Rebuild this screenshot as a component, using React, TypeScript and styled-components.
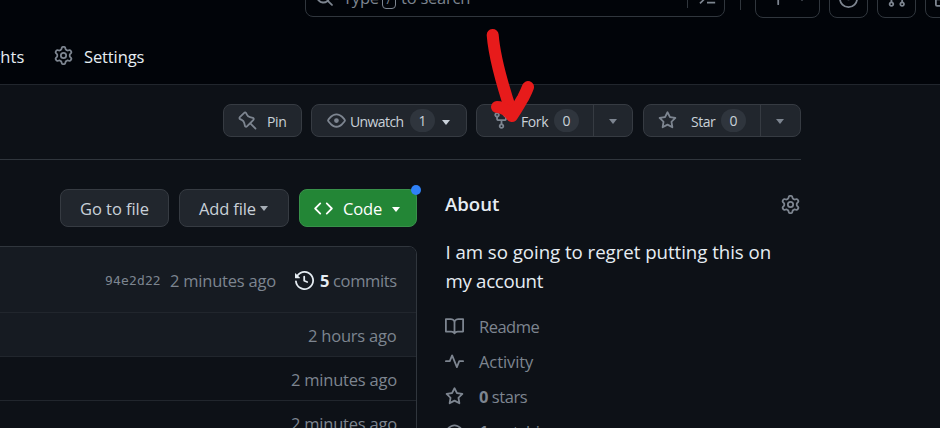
import React from 'react';
import styled, { createGlobalStyle, css } from 'styled-components';

const GlobalStyle = createGlobalStyle`
  *, *::before, *::after { box-sizing: border-box; }
  body { margin: 0; background: #0d1117; overflow: hidden; }
`;

const color = {
  canvas: '#0d1117',
  inset: '#010409',
  subtle: '#161b22',
  button: '#21262d',
  border: '#30363d',
  muted: '#7d8590',
  text: '#e6edf3',
  buttonText: '#c9d1d9',
};

const icons = {
  gear: 'M8 0a8.2 8.2 0 0 1 .701.031C9.444.095 9.99.645 10.16 1.29l.288 1.107c.018.066.079.158.212.224.231.114.454.243.668.386.123.082.233.09.299.071l1.103-.303c.644-.176 1.392.021 1.82.63.27.385.506.792.704 1.218.315.675.111 1.422-.364 1.891l-.814.806c-.049.048-.098.147-.088.294.016.257.016.515 0 .772-.01.147.038.246.088.294l.814.806c.475.469.679 1.216.364 1.891a7.977 7.977 0 0 1-.704 1.217c-.428.61-1.176.807-1.82.63l-1.102-.302c-.067-.019-.177-.011-.3.071a5.909 5.909 0 0 1-.668.386c-.133.066-.194.158-.211.224l-.29 1.106c-.168.646-.715 1.196-1.458 1.26a8.006 8.006 0 0 1-1.402 0c-.743-.064-1.289-.614-1.458-1.26l-.289-1.106c-.018-.066-.079-.158-.212-.224a5.738 5.738 0 0 1-.668-.386c-.123-.082-.233-.09-.299-.071l-1.103.303c-.644.176-1.392-.021-1.82-.63a8.12 8.12 0 0 1-.704-1.218c-.315-.675-.111-1.422.363-1.891l.815-.806c.05-.048.098-.147.088-.294a6.214 6.214 0 0 1 0-.772c.01-.147-.038-.246-.088-.294l-.815-.806C.635 6.045.431 5.298.746 4.623a7.92 7.92 0 0 1 .704-1.217c.428-.61 1.176-.807 1.82-.63l1.102.302c.067.019.177.011.3-.071.214-.143.437-.272.668-.386.133-.066.194-.158.211-.224l.29-1.106C6.009.645 6.556.095 7.299.03 7.53.01 7.764 0 8 0Zm-.571 1.525c-.036.003-.108.036-.137.146l-.289 1.105c-.147.561-.549.967-.998 1.189-.173.086-.34.183-.5.29-.417.278-.97.423-1.529.27l-1.103-.303c-.109-.03-.175.016-.195.045-.22.312-.412.644-.573.99-.014.031-.021.11.059.19l.815.806c.411.406.562.957.53 1.456a4.709 4.709 0 0 0 0 .582c.032.499-.119 1.05-.53 1.456l-.815.806c-.081.08-.073.159-.059.19.162.346.353.677.573.989.02.03.085.076.195.046l1.102-.303c.56-.153 1.113-.008 1.53.27.161.107.328.204.501.29.447.222.85.629.997 1.189l.289 1.105c.029.109.101.143.137.146a6.6 6.6 0 0 0 1.142 0c.036-.003.108-.036.137-.146l.289-1.105c.147-.561.549-.967.998-1.189.173-.086.34-.183.5-.29.417-.278.97-.423 1.529-.27l1.103.303c.109.029.175-.016.195-.045.22-.313.411-.644.573-.99.014-.031.021-.11-.059-.19l-.815-.806c-.411-.406-.562-.957-.53-1.456a4.709 4.709 0 0 0 0-.582c-.032-.499.119-1.05.53-1.456l.815-.806c.081-.08.073-.159.059-.19a6.464 6.464 0 0 0-.573-.989c-.02-.03-.085-.076-.195-.046l-1.102.303c-.56.153-1.113.008-1.53-.27a4.44 4.44 0 0 0-.501-.29c-.447-.222-.85-.629-.997-1.189l-.289-1.105c-.029-.11-.101-.143-.137-.146a6.6 6.6 0 0 0-1.142 0ZM11 8a3 3 0 1 1-6 0 3 3 0 0 1 6 0ZM9.5 8a1.5 1.5 0 1 0-3.001.001A1.5 1.5 0 0 0 9.5 8Z',
  pin: 'm11.294.984 3.722 3.722a1.75 1.75 0 0 1-.504 2.826l-1.327.613a3.089 3.089 0 0 0-1.707 2.084l-.584 2.454c-.317 1.332-1.972 1.8-2.94.832L5.75 11.311 1.78 15.28a.749.749 0 1 1-1.06-1.06l3.969-3.97-2.204-2.204c-.968-.968-.5-2.623.832-2.94l2.454-.584a3.08 3.08 0 0 0 2.084-1.707l.613-1.327a1.75 1.75 0 0 1 2.826-.504ZM6.283 9.723l2.732 2.731a.25.25 0 0 0 .42-.119l.584-2.454a4.586 4.586 0 0 1 2.537-3.098l1.328-.613a.25.25 0 0 0 .072-.404l-3.722-3.722a.25.25 0 0 0-.404.072l-.613 1.328a4.584 4.584 0 0 1-3.098 2.537l-2.454.584a.25.25 0 0 0-.119.42l2.731 2.732Z',
  eye: 'M8 2c1.981 0 3.671.992 4.933 2.078 1.27 1.091 2.187 2.345 2.637 3.023a1.62 1.62 0 0 1 0 1.798c-.45.678-1.367 1.932-2.637 3.023C11.67 13.008 9.981 14 8 14c-1.981 0-3.671-.992-4.933-2.078C1.797 10.83.88 9.576.43 8.898a1.62 1.62 0 0 1 0-1.798c.45-.677 1.367-1.931 2.637-3.022C4.33 2.992 6.019 2 8 2ZM1.679 7.932a.12.12 0 0 0 0 .136c.411.622 1.241 1.75 2.366 2.717C5.176 11.758 6.527 12.5 8 12.5c1.473 0 2.825-.742 3.955-1.715 1.124-.967 1.954-2.096 2.366-2.717a.12.12 0 0 0 0-.136c-.412-.621-1.242-1.75-2.366-2.717C10.824 4.242 9.473 3.5 8 3.5c-1.473 0-2.825.742-3.955 1.715-1.124.967-1.954 2.096-2.366 2.717ZM8 10a2 2 0 1 1-.001-3.999A2 2 0 0 1 8 10Z',
  fork: 'M5 5.372v.878c0 .414.336.75.75.75h4.5a.75.75 0 0 0 .75-.75v-.878a2.25 2.25 0 1 1 1.5 0v.878a2.25 2.25 0 0 1-2.25 2.25h-1.5v2.128a2.251 2.251 0 1 1-1.5 0V8.5h-1.5A2.25 2.25 0 0 1 3.5 6.25v-.878a2.25 2.25 0 1 1 1.5 0ZM5 3.25a.75.75 0 1 0-1.5 0 .75.75 0 0 0 1.5 0Zm6.75.75a.75.75 0 1 0 0-1.5.75.75 0 0 0 0 1.5Zm-3 8.75a.75.75 0 1 0-1.5 0 .75.75 0 0 0 1.5 0Z',
  star: 'M8 .25a.75.75 0 0 1 .673.418l1.882 3.815 4.21.612a.75.75 0 0 1 .416 1.279l-3.046 2.97.719 4.192a.751.751 0 0 1-1.088.791L8 12.347l-3.766 1.98a.75.75 0 0 1-1.088-.79l.72-4.194L.818 6.374a.75.75 0 0 1 .416-1.28l4.21-.611L7.327.668A.75.75 0 0 1 8 .25Zm0 2.445L6.615 5.5a.75.75 0 0 1-.564.41l-3.097.45 2.24 2.184a.75.75 0 0 1 .216.664l-.528 3.084 2.769-1.456a.75.75 0 0 1 .698 0l2.77 1.456-.53-3.084a.75.75 0 0 1 .216-.664l2.24-2.183-3.096-.45a.75.75 0 0 1-.564-.41L8 2.694Z',
  code: 'm11.28 3.22 4.25 4.25a.75.75 0 0 1 0 1.06l-4.25 4.25a.749.749 0 0 1-1.275-.326.749.749 0 0 1 .215-.734L13.94 8l-3.72-3.72a.749.749 0 0 1 .326-1.275.749.749 0 0 1 .734.215Zm-6.56 0a.751.751 0 0 1 1.042.018.751.751 0 0 1 .018 1.042L2.06 8l3.72 3.72a.749.749 0 0 1-.326 1.275.749.749 0 0 1-.734-.215L.47 8.53a.75.75 0 0 1 0-1.06Z',
  book: 'M0 1.75A.75.75 0 0 1 .75 1h4.253c1.227 0 2.317.59 3 1.501A3.743 3.743 0 0 1 11.006 1h4.245a.75.75 0 0 1 .75.75v10.5a.75.75 0 0 1-.75.75h-4.507a2.25 2.25 0 0 0-1.591.659l-.622.621a.75.75 0 0 1-1.06 0l-.622-.621A2.25 2.25 0 0 0 5.258 13H.75a.75.75 0 0 1-.75-.75Zm7.251 10.324.004-5.073-.002-2.253A2.25 2.25 0 0 0 5.003 2.5H1.5v9h3.757a3.75 3.75 0 0 1 1.994.574ZM8.755 4.75l-.004 7.322a3.752 3.752 0 0 1 1.992-.572H14.5v-9h-3.495a2.25 2.25 0 0 0-2.25 2.25Z',
  pulse: 'M6 2c.306 0 .582.187.696.471L10 10.731l1.304-3.26A.751.751 0 0 1 12 7h3.25a.75.75 0 0 1 0 1.5h-2.742l-1.812 4.528a.751.751 0 0 1-1.392 0L6 4.77 4.696 8.03A.75.75 0 0 1 4 8.5H.75a.75.75 0 0 1 0-1.5h2.742l1.812-4.529A.751.751 0 0 1 6 2Z',
  history: 'm.427 1.927 1.215 1.215a8.002 8.002 0 1 1-1.6 5.685.75.75 0 1 1 1.493-.154 6.5 6.5 0 1 0 1.18-4.458l1.358 1.358A.25.25 0 0 1 3.896 6H.25A.25.25 0 0 1 0 5.75V2.104a.25.25 0 0 1 .427-.177ZM7.75 4a.75.75 0 0 1 .75.75v2.992l2.028.812a.75.75 0 0 1-.557 1.392l-2.5-1A.751.751 0 0 1 7 8.25v-3.5A.75.75 0 0 1 7.75 4Z',
  search: 'M10.68 11.74a6 6 0 0 1-7.922-8.982 6 6 0 0 1 8.982 7.922l3.04 3.04a.749.749 0 0 1-.326 1.275.749.749 0 0 1-.734-.215ZM11.5 7a4.499 4.499 0 1 0-8.997 0A4.499 4.499 0 0 0 11.5 7Z',
  prompt: 'm1.22 13.22 5-5L1.22 3.28l1.06-1.06 5.47 5.5a.75.75 0 0 1 0 1.06l-5.47 5.5ZM8 12.25h7.25v1.5H8Z',
  plus: 'M7.75 2a.75.75 0 0 1 .75.75V7h4.25a.75.75 0 0 1 0 1.5H8.5v4.25a.75.75 0 0 1-1.5 0V8.5H2.75a.75.75 0 0 1 0-1.5H7V2.75A.75.75 0 0 1 7.75 2Z',
  issue: 'M8 9.5a1.5 1.5 0 1 0 0-3 1.5 1.5 0 0 0 0 3ZM8 0a8 8 0 1 1 0 16A8 8 0 0 1 8 0ZM1.5 8a6.5 6.5 0 1 0 13 0 6.5 6.5 0 0 0-13 0Z',
  pull: 'M1.5 3.25a2.25 2.25 0 1 1 3 2.122v5.256a2.251 2.251 0 1 1-1.5 0V5.372A2.25 2.25 0 0 1 1.5 3.25Zm5.677-.177L9.573.677A.25.25 0 0 1 10 .854V2.5h1A2.5 2.5 0 0 1 13.5 5v5.628a2.251 2.251 0 1 1-1.5 0V5a1 1 0 0 0-1-1h-1v1.646a.25.25 0 0 1-.427.177L7.177 3.427a.25.25 0 0 1 0-.354ZM3.75 2.5a.75.75 0 1 0 0 1.5.75.75 0 0 0 0-1.5Zm0 9.5a.75.75 0 1 0 0 1.5.75.75 0 0 0 0-1.5Zm8.25.75a.75.75 0 1 0 1.5 0 .75.75 0 0 0-1.5 0Z',
  inbox: 'M2.8 2.06A1.75 1.75 0 0 1 4.41 1h7.18c.7 0 1.333.417 1.61 1.06l2.74 6.395c.04.093.06.194.06.295v4.5A1.75 1.75 0 0 1 14.25 15H1.75A1.75 1.75 0 0 1 0 13.25v-4.5c0-.101.02-.202.06-.295Zm1.61.44a.25.25 0 0 0-.23.152L1.887 8H4.75a.75.75 0 0 1 .6.3L6.625 10h2.75l1.275-1.7a.75.75 0 0 1 .6-.3h2.863L11.82 2.652a.25.25 0 0 0-.23-.152Zm10.09 7h-2.875l-1.275 1.7a.75.75 0 0 1-.6.3h-3.5a.75.75 0 0 1-.6-.3L4.375 9.5H1.5v3.75c0 .138.112.25.25.25h12.5a.25.25 0 0 0 .25-.25Z',
};

const Svg = styled.svg<{ $flip?: boolean }>`
  display: block;
  flex: none;
  fill: currentColor;
  ${(p) => p.$flip && css`transform: scaleX(-1);`}
`;

function Icon({ name, size = 19, flip }: { name: keyof typeof icons; size?: number; flip?: boolean }) {
  return (
    <Svg width={size} height={size} viewBox="0 0 16 16" $flip={flip}>
      <path d={icons[name]} />
    </Svg>
  );
}

const Page = styled.div`
  width: 940px;
  height: 428px;
  overflow: hidden;
  position: relative;
  display: flex;
  flex-direction: column;
  background: ${color.canvas};
  color: ${color.text};
  font-family: 'Open Sans', 'Noto Sans', sans-serif;
  font-size: 16.5px;
`;

/* A single-line label occupying a fixed advance, so neighbours never shift. */
const Label = styled.span<{ $w?: number; $ls?: number; $size?: number; $dy?: number }>`
  display: block;
  flex: none;
  white-space: nowrap;
  line-height: 24px;
  ${(p) => p.$w && `width: ${p.$w}px;`}
  ${(p) => p.$size && `font-size: ${p.$size}px;`}
  letter-spacing: ${(p) => p.$ls ?? -0.22}px;
  padding-top: ${(p) => p.$dy ?? 0}px;
`;

const Caret = styled.span<{ $color?: string }>`
  flex: none;
  width: 0;
  height: 0;
  border: 4.5px solid transparent;
  border-width: 5px 4.5px 0;
  border-top-color: ${(p) => p.$color ?? color.muted};
`;

const Header = styled.header`
  height: 85px;
  flex: none;
  background: ${color.inset};
  border-bottom: 1px solid #21262d;
  display: flex;
  flex-direction: column;
`;

const TopBar = styled.div`
  display: flex;
  align-items: flex-start;
  margin-top: -23px;
  padding-left: 305px;
  width: 980px;
  height: 41px;
  color: ${color.muted};
`;

const SearchBox = styled.div`
  width: 420px;
  height: 40px;
  border: 1px solid ${color.border};
  border-radius: 8px;
  display: flex;
  align-items: center;
  padding-left: 9px;
`;

const Slash = styled.kbd`
  flex: none;
  width: 14px;
  height: 19px;
  margin: 5px 5px 0 5px;
  border: 1px solid ${color.muted};
  border-radius: 4px;
  font: 13px/16px 'Open Sans', sans-serif;
  text-align: center;
`;

const Divider = styled.span<{ $h: number; $ml: number; $mr: number }>`
  flex: none;
  width: 1px;
  height: ${(p) => p.$h}px;
  margin-left: ${(p) => p.$ml}px;
  margin-right: ${(p) => p.$mr}px;
  background: ${color.border};
`;

const SquareButton = styled.div<{ $w?: number }>`
  flex: none;
  width: ${(p) => p.$w ?? 39}px;
  height: 40px;
  margin: 1px 9px 0 0;
  border: 1px solid ${color.border};
  border-radius: 8px;
  display: flex;
  align-items: center;
  justify-content: center;
  gap: 10px;
`;

const NavRow = styled.nav`
  display: flex;
  align-items: center;
  height: 66px;
  padding-top: 12px;
  margin-left: -36px;
  color: ${color.text};
`;

const Muted = styled.span<{ $ml?: number; $mr?: number; $color?: string; $mt?: number }>`
  display: flex;
  flex: none;
  color: ${(p) => p.$color ?? color.muted};
  margin: ${(p) => p.$mt ?? 0}px ${(p) => p.$mr ?? 0}px 0 ${(p) => p.$ml ?? 0}px;
`;

const ActionBar = styled.div`
  width: 801px;
  height: 75px;
  flex: none;
  padding: 19px 0 0 223px;
  border-bottom: 1px solid ${color.border};
  display: flex;
`;

const Action = styled.div<{ $w: number; $mr?: number }>`
  width: ${(p) => p.$w}px;
  height: 33px;
  margin-right: ${(p) => p.$mr ?? 9}px;
  flex: none;
  display: flex;
  align-items: center;
  overflow: hidden;
  border: 1px solid #363b42;
  border-radius: 8px;
  background: ${color.button};
  color: ${color.buttonText};
  font-size: 14px;
`;

const Counter = styled.span`
  flex: none;
  width: 25px;
  height: 23px;
  border-radius: 12px;
  background: #2f353d;
  text-align: center;
  line-height: 23px;
  font-size: 14px;
`;

const Split = styled.span<{ $ml: number }>`
  flex: none;
  margin-left: ${(p) => p.$ml}px;
  width: 40px;
  height: 31px;
  border-left: 1px solid #363b42;
  display: flex;
  align-items: center;
  padding: 2px 0 0 14.5px;
`;

const Body = styled.main`
  display: flex;
  flex: 1;
  min-height: 0;
`;

const Files = styled.section`
  width: 417px;
  flex: none;
  padding-top: 29px;
`;

const Toolbar = styled.div`
  display: flex;
  padding-left: 60px;
  gap: 10px;
  height: 57px;
`;

const Button = styled.div<{ $w: number; $primary?: boolean }>`
  position: relative;
  width: ${(p) => p.$w}px;
  height: 38px;
  flex: none;
  display: flex;
  align-items: center;
  border: 1px solid ${(p) => (p.$primary ? '#38914a' : '#363b42')};
  border-radius: 8px;
  background: ${(p) => (p.$primary ? '#238636' : color.button)};
  color: ${(p) => (p.$primary ? '#fff' : color.buttonText)};
  font-weight: ${(p) => (p.$primary ? 500 : 400)};
`;

const Dot = styled.span`
  position: absolute;
  top: -5px;
  right: -5px;
  width: 10px;
  height: 10px;
  border-radius: 50%;
  background: #2f81f7;
`;

const Table = styled.div`
  margin-left: -10px;
  width: 427px;
  border: 1px solid ${color.border};
  border-radius: 8px;
  overflow: hidden;
  color: ${color.muted};
`;

const Commit = styled.div`
  height: 65px;
  background: ${color.subtle};
  padding: 2px 0 0 114px;
  display: flex;
  align-items: center;
`;

const Hash = styled.code`
  flex: none;
  width: 65px;
  font: 13px/24px 'DejaVu Sans Mono', monospace;
  letter-spacing: 0.15px;
  padding-top: 1px;
`;

const FileRow = styled.div<{ $hover?: boolean; $pl: number }>`
  height: 44px;
  border-top: 1px solid #21262d;
  padding: 3px 0 0 ${(p) => p.$pl}px;
  display: flex;
  align-items: center;
  background: ${(p) => (p.$hover ? color.subtle : color.canvas)};
`;

const About = styled.aside`
  width: 356px;
  margin-left: 28px;
  padding-top: 32px;
`;

const AboutHead = styled.div`
  display: flex;
  justify-content: space-between;
  align-items: center;
  height: 24px;
  padding-right: 1px;
  font-weight: 600;
`;

const Description = styled.p`
  margin: 21px 0 0 0.5px;
  height: 72px;
  font-size: 18.7px;
  line-height: 29px;
`;

const Line = styled.span<{ $ls: number }>`
  display: block;
  white-space: nowrap;
  letter-spacing: ${(p) => p.$ls}px;
`;

const Meta = styled.div`
  display: flex;
  align-items: center;
  gap: 15px;
  height: 35px;
  color: ${color.muted};
`;

const Strong = styled.b<{ $color?: string }>`
  font-weight: 700;
  color: ${(p) => p.$color ?? 'inherit'};
`;

const Arrow = styled.svg`
  position: absolute;
  left: 480px;
  top: 20px;
  fill: none;
  stroke: #e71b1b;
  stroke-width: 12;
  stroke-linecap: round;
  stroke-linejoin: round;
`;

export default function App() {
  return (
    <Page>
      <GlobalStyle />
      <Header>
        <TopBar>
          <SearchBox>
            <Icon name="search" />
            <Muted $ml={9}><Label $w={34} $dy={2}>Type</Label></Muted>
            <Slash>/</Slash>
            <Label $w={280} $dy={2}>to search</Label>
            <Divider $h={22} $ml={6} $mr={10} />
            <Icon name="prompt" size={18} />
          </SearchBox>
          <Divider $h={33} $ml={15} $mr={14} />
          <SquareButton $w={65}>
            <Icon name="plus" />
            <Caret />
          </SquareButton>
          <SquareButton><Icon name="issue" /></SquareButton>
          <SquareButton><Icon name="pull" /></SquareButton>
          <SquareButton><Icon name="inbox" /></SquareButton>
        </TopBar>
        <NavRow>
          <Label $w={90} $ls={0.1}>Insights</Label>
          <Muted $mt={-3}><Icon name="gear" /></Muted>
          <Muted $ml={11} $color={color.text}><Label $ls={-0.12}>Settings</Label></Muted>
        </NavRow>
      </Header>

      <ActionBar>
        <Action $w={79}>
          <Muted $ml={14} $mr={10}><Icon name="pin" flip /></Muted>
          <Label $dy={3} $ls={-0.4}>Pin</Label>
        </Action>
        <Action $w={156}>
          <Muted $ml={15} $mr={4}><Icon name="eye" /></Muted>
          <Label $w={60} $dy={3} $ls={-0.6}>Unwatch</Label>
          <Counter>1</Counter>
          <Muted $ml={7} $mt={4}><Caret $color={color.buttonText} /></Muted>
        </Action>
        <Action $w={157} $mr={10}>
          <Muted $ml={15} $mr={10}><Icon name="fork" /></Muted>
          <Label $w={33} $dy={3} $ls={-0.4}>Fork</Label>
          <Counter>0</Counter>
          <Split $ml={14}><Caret /></Split>
        </Action>
        <Action $w={158} $mr={0}>
          <Muted $ml={14} $mr={14}><Icon name="star" /></Muted>
          <Label $w={30} $dy={3} $ls={-0.5}>Star</Label>
          <Counter>0</Counter>
          <Split $ml={14}><Caret /></Split>
        </Action>
      </ActionBar>

      <Body>
        <Files>
          <Toolbar>
            <Button $w={109}>
              <Muted $ml={19} $color={color.buttonText}><Label $dy={2} $ls={-0.05}>Go to file</Label></Muted>
            </Button>
            <Button $w={110}>
              <Muted $ml={19} $color={color.buttonText}><Label $w={61} $dy={2} $ls={-0.15}>Add file</Label></Muted>
              <Caret $color="#a6adb5" />
            </Button>
            <Button $w={118} $primary>
              <Muted $ml={14} $mr={10} $color="#fff"><Icon name="code" /></Muted>
              <Label $w={49} $dy={2} $ls={-0.1}>Code</Label>
              <Muted $mt={2}><Caret $color="#fff" /></Muted>
              <Dot />
            </Button>
          </Toolbar>
          <Table>
            <Commit>
              <Hash>94e2d22</Hash>
              <Label $w={125}>2 minutes ago</Label>
              <Muted $color={color.text} $mr={6}><Icon name="history" /></Muted>
              <Label $w={13} $dy={1}><Strong $color={color.text}>5</Strong></Label>
              <Label $dy={1} $ls={-0.35}>commits</Label>
            </Commit>
            <FileRow $hover $pl={317}><Label>2 hours ago</Label></FileRow>
            <FileRow $pl={300}><Label>2 minutes ago</Label></FileRow>
            <FileRow $pl={300}><Label>2 minutes ago</Label></FileRow>
          </Table>
        </Files>

        <About>
          <AboutHead>
            <Label $size={18.6} $ls={0}>About</Label>
            <Muted><Icon name="gear" /></Muted>
          </AboutHead>
          <Description>
            <Line $ls={-0.05}>I am so going to regret putting this on</Line>
            <Line $ls={-0.3}>my account</Line>
          </Description>
          <Meta><Icon name="book" /><Label $ls={-0.5}>Readme</Label></Meta>
          <Meta><Icon name="pulse" /><Label $ls={-0.1}>Activity</Label></Meta>
          <Meta><Icon name="star" /><Label $ls={-0.45}><Strong>0</Strong> stars</Label></Meta>
          <Meta><Icon name="eye" /><Label $ls={-0.4}><Strong>1</Strong> watching</Label></Meta>
        </About>
      </Body>

      <Arrow width="60" height="110" viewBox="480 20 60 110" aria-hidden="true">
        <path d="M492.7 35C494 52 500 78 512 114" />
        <path d="M497 107C503 107 508 111 512 116C518 107 521 101 523 98C525 94 527 90 528 87" />
      </Arrow>
    </Page>
  );
}
